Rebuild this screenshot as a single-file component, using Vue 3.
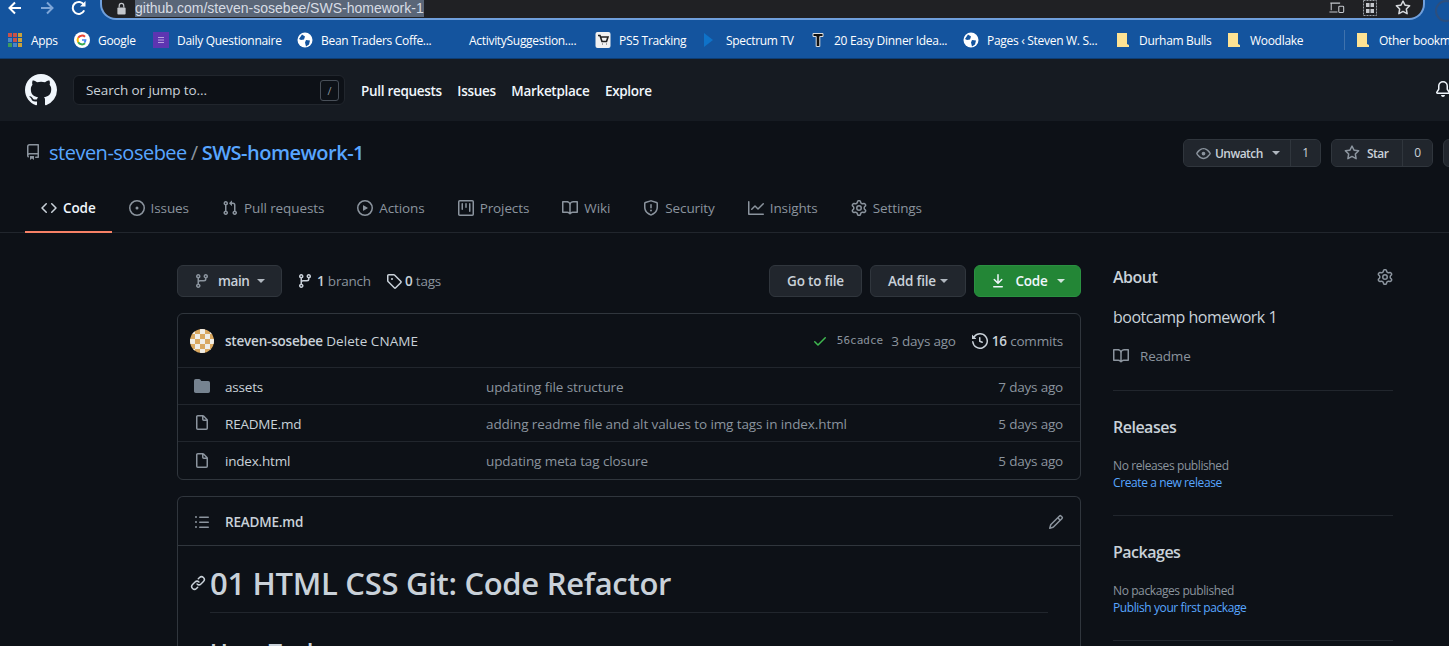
<script setup>
const icons = {
  github: 'M8 0C3.58 0 0 3.58 0 8c0 3.54 2.29 6.53 5.47 7.59.4.07.55-.17.55-.38 0-.19-.01-.82-.01-1.49-2.01.37-2.53-.49-2.69-.94-.09-.23-.48-.94-.82-1.13-.28-.15-.68-.52-.01-.53.63-.01 1.08.58 1.23.82.72 1.21 1.87.87 2.33.66.07-.52.28-.87.51-1.07-1.78-.2-3.64-.89-3.64-3.95 0-.87.31-1.59.82-2.15-.08-.2-.36-1.02.08-2.12 0 0 .67-.21 2.2.82.64-.18 1.32-.27 2-.27.68 0 1.36.09 2 .27 1.53-1.04 2.2-.82 2.2-.82.44 1.1.16 1.92.08 2.12.51.56.82 1.27.82 2.15 0 3.07-1.87 3.75-3.65 3.95.29.25.54.73.54 1.48 0 1.07-.01 1.93-.01 2.2 0 .21.15.46.55.38A8.013 8.013 0 0016 8c0-4.42-3.58-8-8-8z',
  repo: 'M2 2.5A2.5 2.5 0 014.5 0h8.75a.75.75 0 01.75.75v12.5a.75.75 0 01-.75.75h-2.5a.75.75 0 110-1.5h1.75v-2h-8a1 1 0 00-.714 1.7.75.75 0 01-1.072 1.05A2.495 2.495 0 012 11.5v-9zm10.5-1V9h-8c-.356 0-.694.074-1 .208V2.5a1 1 0 011-1h8zM5 12.25v3.25a.25.25 0 00.4.2l1.45-1.087a.25.25 0 01.3 0L8.6 15.7a.25.25 0 00.4-.2v-3.25a.25.25 0 00-.25-.25h-3.5a.25.25 0 00-.25.25z',
  code: 'M4.72 3.22a.75.75 0 011.06 1.06L2.06 8l3.72 3.72a.75.75 0 11-1.06 1.06L.47 8.53a.75.75 0 010-1.06l4.25-4.25zm6.56 0a.75.75 0 10-1.06 1.06L13.94 8l-3.72 3.72a.75.75 0 101.06 1.06l4.25-4.25a.75.75 0 000-1.06l-4.25-4.25z',
  issue: 'M8 9.5a1.5 1.5 0 100-3 1.5 1.5 0 000 3zM8 0a8 8 0 100 16A8 8 0 008 0zM1.5 8a6.5 6.5 0 1113 0 6.5 6.5 0 01-13 0z',
  pull: 'M7.177 3.073L9.573.677A.25.25 0 0110 .854v4.792a.25.25 0 01-.427.177L7.177 3.427a.25.25 0 010-.354zM3.75 2.5a.75.75 0 100 1.5.75.75 0 000-1.5zm-2.25.75a2.25 2.25 0 113 2.122v5.256a2.251 2.251 0 11-1.5 0V5.372A2.25 2.25 0 011.5 3.25zM11 2.5h-1V4h1a1 1 0 011 1v5.628a2.251 2.251 0 101.5 0V5A2.5 2.5 0 0011 2.5zm1 10.25a.75.75 0 111.5 0 .75.75 0 01-1.5 0zM3.75 12a.75.75 0 100 1.5.75.75 0 000-1.5z',
  play: 'M1.5 8a6.5 6.5 0 1113 0 6.5 6.5 0 01-13 0zM8 0a8 8 0 100 16A8 8 0 008 0zM6.379 5.227A.25.25 0 006 5.442v5.117a.25.25 0 00.379.214l4.264-2.559a.25.25 0 000-.428L6.379 5.227z',
  project: 'M1.75 0A1.75 1.75 0 000 1.75v12.5C0 15.216.784 16 1.75 16h12.5A1.75 1.75 0 0016 14.25V1.75A1.75 1.75 0 0014.25 0H1.75zM1.5 1.75a.25.25 0 01.25-.25h12.5a.25.25 0 01.25.25v12.5a.25.25 0 01-.25.25H1.75a.25.25 0 01-.25-.25V1.75zM11.75 3a.75.75 0 00-.75.75v7.5a.75.75 0 001.5 0v-7.5a.75.75 0 00-.75-.75zm-8.25.75a.75.75 0 011.5 0v5.5a.75.75 0 01-1.5 0v-5.5zM8 3a.75.75 0 00-.75.75v3.5a.75.75 0 001.5 0v-3.5A.75.75 0 008 3z',
  book: 'M0 1.75A.75.75 0 01.75 1h4.253c1.227 0 2.317.59 3 1.501A3.744 3.744 0 0111.006 1h4.245a.75.75 0 01.75.75v10.5a.75.75 0 01-.75.75h-4.507a2.25 2.25 0 00-1.591.659l-.622.621a.75.75 0 01-1.06 0l-.622-.621A2.25 2.25 0 005.258 13H.75a.75.75 0 01-.75-.75V1.75zm8.755 3a2.25 2.25 0 012.25-2.25H14.5v9h-3.757c-.71 0-1.4.201-1.992.572l.004-7.322zm-1.504 7.324l.004-5.073-.002-2.253A2.25 2.25 0 005.003 2.5H1.5v9h3.757a3.75 3.75 0 011.994.574z',
  shield: 'M7.467.133a1.75 1.75 0 011.066 0l5.25 1.68A1.75 1.75 0 0115 3.48V7c0 1.566-.32 3.182-1.303 4.682-.983 1.498-2.585 2.813-5.032 3.855a1.7 1.7 0 01-1.33 0c-2.447-1.042-4.049-2.357-5.032-3.855C1.32 10.182 1 8.566 1 7V3.48a1.75 1.75 0 011.217-1.667l5.25-1.68zm.61 1.429a.25.25 0 00-.153 0l-5.25 1.68a.25.25 0 00-.174.238V7c0 1.358.275 2.666 1.057 3.86.784 1.194 2.121 2.34 4.366 3.297a.2.2 0 00.154 0c2.245-.956 3.582-2.104 4.366-3.298C13.225 9.666 13.5 8.36 13.5 7V3.48a.25.25 0 00-.174-.237l-5.25-1.68zM9 10.5a1 1 0 11-2 0 1 1 0 012 0zm-.25-5.75a.75.75 0 10-1.5 0v3a.75.75 0 001.5 0v-3z',
  graph: 'M1.5 1.75a.75.75 0 00-1.5 0v12.5c0 .414.336.75.75.75h14.5a.75.75 0 000-1.5H1.5V1.75zm14.28 2.53a.75.75 0 00-1.06-1.06L10 7.94 7.53 5.47a.75.75 0 00-1.06 0L3.22 8.72a.75.75 0 001.06 1.06L7 7.06l2.47 2.47a.75.75 0 001.06 0l5.25-5.25z',
  gear: 'M7.429 1.525a6.593 6.593 0 011.142 0c.036.003.108.036.137.146l.289 1.105c.147.56.55.967.997 1.189.174.086.341.183.501.29.417.278.97.423 1.53.27l1.102-.303c.11-.03.175.016.195.046.219.31.41.641.573.989.014.031.022.11-.059.19l-.815.806c-.411.406-.562.957-.53 1.456a4.588 4.588 0 010 .582c-.032.499.119 1.05.53 1.456l.815.806c.08.08.073.159.059.19a6.494 6.494 0 01-.573.99c-.02.029-.086.074-.195.045l-1.103-.303c-.559-.153-1.112-.008-1.529.27-.16.107-.327.204-.5.29-.449.222-.851.628-.998 1.189l-.289 1.105c-.029.11-.101.143-.137.146a6.613 6.613 0 01-1.142 0c-.036-.003-.108-.037-.137-.146l-.289-1.105c-.147-.56-.55-.967-.997-1.189a4.502 4.502 0 01-.501-.29c-.417-.278-.97-.423-1.53-.27l-1.102.303c-.11.03-.175-.016-.195-.046a6.492 6.492 0 01-.573-.989c-.014-.031-.022-.11.059-.19l.815-.806c.411-.406.562-.957.53-1.456a4.587 4.587 0 010-.582c.032-.499-.119-1.05-.53-1.456l-.815-.806c-.08-.08-.073-.159-.059-.19a6.44 6.44 0 01.573-.99c.02-.029.086-.075.195-.045l1.103.303c.559.153 1.112.008 1.529-.27.16-.107.327-.204.5-.29.449-.222.851-.628.998-1.189l.289-1.105c.029-.11.101-.143.137-.146zM8 0c-.236 0-.47.01-.701.03-.743.065-1.29.615-1.458 1.261l-.29 1.106c-.017.066-.078.158-.211.224a5.994 5.994 0 00-.668.386c-.123.082-.233.09-.3.071L3.27 2.776c-.644-.177-1.392.02-1.82.63a7.977 7.977 0 00-.704 1.217c-.315.675-.111 1.422.363 1.891l.815.806c.05.048.098.147.088.294a6.084 6.084 0 000 .772c.01.147-.038.246-.088.294l-.815.806c-.474.469-.678 1.216-.363 1.891.2.428.436.835.704 1.218.428.609 1.176.806 1.82.63l1.103-.303c.066-.019.176-.011.299.071.213.143.436.272.668.386.133.066.194.158.212.224l.289 1.106c.169.646.715 1.196 1.458 1.26a8.094 8.094 0 001.402 0c.743-.064 1.29-.614 1.458-1.26l.29-1.106c.017-.066.078-.158.211-.224a5.98 5.98 0 00.668-.386c.123-.082.233-.09.3-.071l1.102.302c.644.177 1.392-.02 1.82-.63.268-.382.505-.789.704-1.217.315-.675.111-1.422-.364-1.891l-.814-.806c-.05-.048-.098-.147-.088-.294a6.1 6.1 0 000-.772c-.01-.147.039-.246.088-.294l.814-.806c.475-.469.679-1.216.364-1.891a7.992 7.992 0 00-.704-1.218c-.428-.609-1.176-.806-1.82-.63l-1.103.303c-.066.019-.176.011-.299-.071a5.991 5.991 0 00-.668-.386c-.133-.066-.194-.158-.212-.224L10.16 1.29C9.99.645 9.444.095 8.701.031A8.094 8.094 0 008 0zm1.5 8a1.5 1.5 0 11-3 0 1.5 1.5 0 013 0zM11 8a3 3 0 11-6 0 3 3 0 016 0z',
  eye: 'M1.679 7.932c.412-.621 1.242-1.75 2.366-2.717C5.175 4.242 6.527 3.5 8 3.5c1.473 0 2.824.742 3.955 1.715 1.124.967 1.954 2.096 2.366 2.717a.119.119 0 010 .136c-.412.621-1.242 1.75-2.366 2.717C10.825 11.758 9.473 12.5 8 12.5c-1.473 0-2.824-.742-3.955-1.715C2.92 9.818 2.09 8.69 1.679 8.068a.119.119 0 010-.136zM8 2c-1.981 0-3.67.992-4.933 2.078C1.797 5.169.88 6.423.43 7.1a1.619 1.619 0 000 1.798c.45.678 1.367 1.932 2.637 3.024C4.329 13.008 6.019 14 8 14c1.981 0 3.67-.992 4.933-2.078 1.27-1.091 2.187-2.345 2.637-3.023a1.619 1.619 0 000-1.798c-.45-.678-1.367-1.932-2.637-3.023C11.671 2.992 9.981 2 8 2zm0 8a2 2 0 100-4 2 2 0 000 4z',
  star: 'M8 .25a.75.75 0 01.673.418l1.882 3.815 4.21.612a.75.75 0 01.416 1.279l-3.046 2.97.719 4.192a.75.75 0 01-1.088.791L8 12.347l-3.766 1.98a.75.75 0 01-1.088-.79l.72-4.194L.818 6.374a.75.75 0 01.416-1.28l4.21-.611L7.327.668A.75.75 0 018 .25zm0 2.445L6.615 5.5a.75.75 0 01-.564.41l-3.097.45 2.24 2.184a.75.75 0 01.216.664l-.528 3.084 2.769-1.456a.75.75 0 01.698 0l2.77 1.456-.53-3.084a.75.75 0 01.216-.664l2.24-2.183-3.096-.45a.75.75 0 01-.564-.41L8 2.694v.001z',
  branch: 'M11.75 2.5a.75.75 0 100 1.5.75.75 0 000-1.5zm-2.25.75a2.25 2.25 0 113 2.122V6A2.5 2.5 0 0110 8.5H6a1 1 0 00-1 1v1.128a2.251 2.251 0 11-1.5 0V5.372a2.25 2.25 0 111.5 0v1.836A2.492 2.492 0 016 7h4a1 1 0 001-1v-.628A2.25 2.25 0 019.5 3.25zM4.25 12a.75.75 0 100 1.5.75.75 0 000-1.5zM3.5 3.25a.75.75 0 111.5 0 .75.75 0 01-1.5 0z',
  tag: 'M2.5 7.775V2.75a.25.25 0 01.25-.25h5.025a.25.25 0 01.177.073l6.25 6.25a.25.25 0 010 .354l-5.025 5.025a.25.25 0 01-.354 0l-6.25-6.25a.25.25 0 01-.073-.177zm-1.5 0V2.75C1 1.784 1.784 1 2.75 1h5.025c.464 0 .91.184 1.238.513l6.25 6.25a1.75 1.75 0 010 2.474l-5.026 5.026a1.75 1.75 0 01-2.474 0l-6.25-6.25A1.75 1.75 0 011 7.775zM6 5a1 1 0 100 2 1 1 0 000-2z',
  download: 'M7.47 10.78a.75.75 0 001.06 0l3.75-3.75a.75.75 0 00-1.06-1.06L8.75 8.44V1.75a.75.75 0 00-1.5 0v6.69L4.78 5.97a.75.75 0 00-1.06 1.06l3.75 3.75zM3.75 13a.75.75 0 000 1.5h8.5a.75.75 0 000-1.5h-8.5z',
  check: 'M13.78 4.22a.75.75 0 010 1.06l-7.25 7.25a.75.75 0 01-1.06 0L2.22 9.28a.75.75 0 011.06-1.06L6 10.94l6.72-6.72a.75.75 0 011.06 0z',
  history: 'M1.643 3.143L.427 1.927A.25.25 0 000 2.104V5.75c0 .138.112.25.25.25h3.646a.25.25 0 00.177-.427L2.715 4.215a6.5 6.5 0 11-1.18 4.458.75.75 0 10-1.493.154 8.001 8.001 0 101.6-5.684zM7.75 4a.75.75 0 01.75.75v2.992l2.028.812a.75.75 0 01-.557 1.392l-2.5-1A.75.75 0 017 8.25v-3.5A.75.75 0 017.75 4z',
  folder: 'M1.75 1A1.75 1.75 0 000 2.75v10.5C0 14.216.784 15 1.75 15h12.5A1.75 1.75 0 0016 13.25v-8.5A1.75 1.75 0 0014.25 3H7.5a.25.25 0 01-.2-.1l-.9-1.2C6.07 1.26 5.55 1 5 1H1.75z',
  file: 'M3.75 1.5a.25.25 0 00-.25.25v11.5c0 .138.112.25.25.25h8.5a.25.25 0 00.25-.25V6H9.75A1.75 1.75 0 018 4.25V1.5H3.75zm5.75.56v2.19c0 .138.112.25.25.25h2.19L9.5 2.06zM2 1.75C2 .784 2.784 0 3.75 0h5.086c.464 0 .909.184 1.237.513l3.414 3.414c.329.328.513.773.513 1.237v8.086A1.75 1.75 0 0112.25 15h-8.5A1.75 1.75 0 012 13.25V1.75z',
  list: 'M2 4a1 1 0 100-2 1 1 0 000 2zm3.75-1.5a.75.75 0 000 1.5h8.5a.75.75 0 000-1.5h-8.5zm0 5a.75.75 0 000 1.5h8.5a.75.75 0 000-1.5h-8.5zm0 5a.75.75 0 000 1.5h8.5a.75.75 0 000-1.5h-8.5zM3 8a1 1 0 11-2 0 1 1 0 012 0zm-1 6a1 1 0 100-2 1 1 0 000 2z',
  pencil: 'M11.013 1.427a1.75 1.75 0 012.474 0l1.086 1.086a1.75 1.75 0 010 2.474l-8.61 8.61c-.21.21-.47.364-.756.445l-3.251.93a.75.75 0 01-.927-.928l.929-3.25a1.75 1.75 0 01.445-.758l8.61-8.61zm1.414 1.06a.25.25 0 00-.354 0L10.811 3.75l1.439 1.44 1.263-1.263a.25.25 0 000-.354l-1.086-1.086zM11.189 6.25L9.75 4.81l-6.286 6.287a.25.25 0 00-.064.108l-.558 1.953 1.953-.558a.249.249 0 00.108-.064l6.286-6.286z',
  link: 'M7.775 3.275a.75.75 0 001.06 1.06l1.25-1.25a2 2 0 112.83 2.83l-2.5 2.5a2 2 0 01-2.83 0 .75.75 0 00-1.06 1.06 3.5 3.5 0 004.95 0l2.5-2.5a3.5 3.5 0 00-4.95-4.95l-1.25 1.25zm-4.69 9.64a2 2 0 010-2.83l2.5-2.5a2 2 0 012.83 0 .75.75 0 001.06-1.06 3.5 3.5 0 00-4.95 0l-2.5 2.5a3.5 3.5 0 004.95 4.95l1.25-1.25a.75.75 0 00-1.06-1.06l-1.25 1.25a2 2 0 01-2.83 0z',
  bell: 'M8 16a2 2 0 001.985-1.75c.017-.137-.097-.25-.235-.25h-3.5c-.138 0-.252.113-.235.25A2 2 0 008 16zM8 1.5A3.5 3.5 0 004.5 5v2.947c0 .346-.102.683-.294.97l-1.703 2.556a.018.018 0 00-.003.01l.001.006c0 .002.002.004.004.006a.017.017 0 00.006.004l.007.001h10.964l.007-.001a.018.018 0 00.006-.004.016.016 0 00.004-.006l.001-.007a.017.017 0 00-.003-.01l-1.703-2.554a1.75 1.75 0 01-.294-.97V5A3.5 3.5 0 008 1.5zM3 5a5 5 0 0110 0v2.947c0 .05.015.098.042.139l1.703 2.555A1.518 1.518 0 0113.482 13H2.518a1.518 1.518 0 01-1.263-2.36l1.703-2.554A.25.25 0 003 7.947V5z'
}

const bookmarks = [
  { label: 'Apps', icon: 'apps', w: 27 },
  { label: 'Google', icon: 'google', w: 39 },
  { label: 'Daily Questionnaire', icon: 'daily', w: 104 },
  { label: 'Bean Traders Coffe...', icon: 'globe', w: 108 },
  { label: 'ActivitySuggestion....', icon: 'none', w: 110 },
  { label: 'PS5 Tracking', icon: 'cart', w: 67 },
  { label: 'Spectrum TV', icon: 'spectrum', w: 68 },
  { label: '20 Easy Dinner Idea...', icon: 'tee', w: 113 },
  { label: 'Pages ‹ Steven W. S...', icon: 'globe', w: 112 },
  { label: 'Durham Bulls', icon: 'folder', w: 71 },
  { label: 'Woodlake', icon: 'folder', w: 54 }
]

const navLinks = ['Pull requests', 'Issues', 'Marketplace', 'Explore']

const tabs = [
  { label: 'Code', icon: 'code', active: true },
  { label: 'Issues', icon: 'issue' },
  { label: 'Pull requests', icon: 'pull' },
  { label: 'Actions', icon: 'play' },
  { label: 'Projects', icon: 'project' },
  { label: 'Wiki', icon: 'book' },
  { label: 'Security', icon: 'shield' },
  { label: 'Insights', icon: 'graph' },
  { label: 'Settings', icon: 'gear' }
]

const files = [
  { name: 'assets', icon: 'folder', msg: 'updating file structure', age: '7 days ago' },
  { name: 'README.md', icon: 'file', msg: 'adding readme file and alt values to img tags in index.html', age: '5 days ago' },
  { name: 'index.html', icon: 'file', msg: 'updating meta tag closure', age: '5 days ago' }
]

// avatar identicon cells
const avatarCells = [[0, 0], [10, 0], [20, 0], [5, 5], [15, 5], [0, 10], [10, 10], [20, 10], [5, 15], [15, 15], [0, 20], [10, 20], [20, 20]]
</script>

<template>
  <div class="page">
    <div class="chrome-top">
      <svg class="nav-arrow" viewBox="0 0 16 16"><path d="M14 8H3M8 2.5L2.5 8 8 13.5" fill="none" stroke="#fff" stroke-width="2"/></svg>
      <svg class="nav-arrow dim" viewBox="0 0 16 16"><path d="M2 8h11M8 2.5L13.5 8 8 13.5" fill="none" stroke="#7ea6d8" stroke-width="2"/></svg>
      <svg class="nav-arrow" viewBox="0 0 16 16"><path d="M13.2 10.4A6 6 0 1 1 13 5" fill="none" stroke="#fff" stroke-width="2"/><path d="M14.5 1v5.5H9z" fill="#fff"/></svg>
      <div class="omnibox">
        <svg class="lock" viewBox="0 0 12 14"><path d="M3.5 6V4a2.5 2.5 0 0 1 5 0v2" fill="none" stroke="#c4c7cc" stroke-width="1.3"/><rect x="1.5" y="6" width="9" height="7.5" rx="1" fill="#c4c7cc"/></svg>
        <span class="url">github.com/steven-sosebee/SWS-homework-1</span>
        <div class="omni-icons">
          <svg viewBox="0 0 18 16"><path d="M1.5 2.5h11M2.5 2.5v8M.5 12.5h9" fill="none" stroke="#c4c7cc" stroke-width="1.2"/><rect x="11" y="6" width="5.5" height="7" rx="1" fill="none" stroke="#c4c7cc" stroke-width="1.2"/></svg>
          <svg viewBox="0 0 16 16"><rect x="1.5" y=".5" width="13" height="15" fill="none" stroke="#9aa0a6" stroke-dasharray="2 1"/><rect x="4" y="3" width="3.5" height="4" fill="#c4c7cc"/><rect x="8.5" y="3" width="3.5" height="4" fill="#c4c7cc"/><rect x="4" y="9" width="3.5" height="4" fill="#c4c7cc"/><rect x="8.5" y="9" width="3.5" height="4" fill="#c4c7cc"/></svg>
          <svg viewBox="0 0 16 16"><path :d="icons.star" fill="#d5d8dc" fill-rule="evenodd"/></svg>
        </div>
      </div>
      <div class="profile"></div>
    </div>

    <div class="bookmarks">
      <div v-for="b in bookmarks" :key="b.label" class="bookmark">
        <svg class="bm-icon" viewBox="0 0 16 16">
          <template v-if="b.icon === 'apps'">
            <rect x="1" y="1" width="4" height="4" fill="#c9524a"/><rect x="6" y="1" width="4" height="4" fill="#c9524a"/><rect x="11" y="1" width="4" height="4" fill="#c9a13a"/>
            <rect x="1" y="6" width="4" height="4" fill="#4a86c8"/><rect x="6" y="6" width="4" height="4" fill="#c9524a"/><rect x="11" y="6" width="4" height="4" fill="#c9a13a"/>
            <rect x="1" y="11" width="4" height="4" fill="#3f9b5b"/><rect x="6" y="11" width="4" height="4" fill="#4a86c8"/><rect x="11" y="11" width="4" height="4" fill="#c9a13a"/>
          </template>
          <template v-else-if="b.icon === 'google'">
            <circle cx="8" cy="8" r="8" fill="#fff"/>
            <path d="M4.2 5.8A4.4 4.4 0 0 1 11 4.8" fill="none" stroke="#ea4335" stroke-width="2"/>
            <path d="M4.2 10.2a4.4 4.4 0 0 1 0-4.4" fill="none" stroke="#fbbc05" stroke-width="2"/>
            <path d="M11 11.2a4.4 4.4 0 0 1-6.8-1" fill="none" stroke="#34a853" stroke-width="2"/>
            <path d="M8 7.2h4.4c.2 1.5-.4 3-1.4 4l-1.4-1.2c.5-.4.8-1 .9-1.3H8z" fill="#4285f4"/>
          </template>
          <template v-else-if="b.icon === 'daily'">
            <rect width="16" height="16" fill="#5e35b1"/>
            <path d="M5 5.5h6M5 8h6M5 10.5h6" stroke="#b9a3e0" stroke-width="1"/>
          </template>
          <template v-else-if="b.icon === 'globe'">
            <circle cx="8" cy="8" r="7.5" fill="#fff"/>
            <path d="M5 2.5l3 2-1 3-3 .5-2-1zM9 8l4 .5-1 4-3 2-1-4z" fill="#14549e"/>
          </template>
          <template v-else-if="b.icon === 'cart'">
            <rect width="15" height="16" x=".5" rx="2" fill="#f1f1f1"/>
            <path d="M3 3.5h2l2 6h4.5l1.5-4.5H6M7 12h.5M11 12h.5" fill="none" stroke="#222" stroke-width="1.6"/>
          </template>
          <path v-else-if="b.icon === 'spectrum'" d="M2 1l9 7-9 7z" fill="#0f72c8"/>
          <path v-else-if="b.icon === 'tee'" d="M3 1.5h10v3h-3.2v10H6.2v-10H3z" fill="#111" stroke="#ddd" stroke-width="1"/>
          <path v-else-if="b.icon === 'folder'" d="M2 1h10v11l2 1v2H2z" fill="#fde293"/>
        </svg>
        <span class="bm-text" :style="{ width: b.w + 'px' }">{{ b.label }}</span>
      </div>
      <div class="bm-sep"></div>
      <div class="bookmark">
        <svg class="bm-icon" viewBox="0 0 16 16"><path d="M2 1h10v11l2 1v2H2z" fill="#fde293"/></svg>
        <span class="bm-text">Other bookmarks</span>
      </div>
    </div>

    <header class="gh-header">
      <svg class="logo" viewBox="0 0 16 16"><path :d="icons.github" fill="#f0f6fc" fill-rule="evenodd"/></svg>
      <div class="search">
        <span>Search or jump to...</span>
        <kbd class="slash">/</kbd>
      </div>
      <nav class="gh-nav">
        <a v-for="l in navLinks" :key="l">{{ l }}</a>
      </nav>
      <svg class="bell" viewBox="0 0 16 16"><path :d="icons.bell" fill="#f0f6fc" fill-rule="evenodd"/></svg>
    </header>

    <div class="repo-head">
      <div class="repo-title">
        <svg class="ic" viewBox="0 0 16 16"><path :d="icons.repo"/></svg>
        <a class="owner">steven-sosebee</a>
        <span class="slash-sep">/</span>
        <a class="repo-name">SWS-homework-1</a>
      </div>
      <div class="repo-actions">
        <div class="counter-btn">
          <span class="cb-main w1"><svg class="ic" viewBox="0 0 16 16"><path :d="icons.eye"/></svg><b>Unwatch</b><i class="caret"></i></span>
          <span class="cb-num">1</span>
        </div>
        <div class="counter-btn">
          <span class="cb-main w2"><svg class="ic" viewBox="0 0 16 16"><path :d="icons.star"/></svg><b>Star</b></span>
          <span class="cb-num">0</span>
        </div>
        <div class="counter-btn fork"></div>
      </div>
    </div>

    <nav class="tabs">
      <a v-for="t in tabs" :key="t.label" class="tab" :class="{ active: t.active }">
        <svg class="ic" viewBox="0 0 16 16"><path :d="icons[t.icon]"/></svg>
        <span>{{ t.label }}</span>
      </a>
    </nav>

    <div class="layout">
      <main class="main-col">
        <div class="file-nav">
          <button class="btn branch-btn"><svg class="ic" viewBox="0 0 16 16"><path :d="icons.branch"/></svg><span>main</span><i class="caret"></i></button>
          <a class="meta-link first"><svg class="ic" viewBox="0 0 16 16"><path :d="icons.branch"/></svg><b>1</b> branch</a>
          <a class="meta-link"><svg class="ic" viewBox="0 0 16 16"><path :d="icons.tag"/></svg><b>0</b> tags</a>
          <button class="btn goto">Go to file</button>
          <button class="btn addfile">Add file<i class="caret"></i></button>
          <button class="btn green"><svg class="ic" viewBox="0 0 16 16"><path :d="icons.download"/></svg><span>Code</span><i class="caret"></i></button>
        </div>

        <div class="file-box">
          <div class="commit-row">
            <svg class="avatar" viewBox="0 0 24 24">
              <rect width="24" height="24" fill="#d9a860"/>
              <rect v-for="c in avatarCells" :key="c.join()" :x="c[0]" :y="c[1]" width="5" height="5" fill="#f0ede6"/>
            </svg>
            <span class="commit-msg"><b>steven-sosebee</b> <span class="commit-text">Delete CNAME</span></span>
            <svg class="ic check" viewBox="0 0 16 16"><path :d="icons.check"/></svg>
            <code class="sha">56cadce</code>
            <span class="when">3 days ago</span>
            <svg class="ic hist" viewBox="0 0 16 16"><path :d="icons.history"/></svg>
            <span class="commits"><b>16</b> commits</span>
          </div>
          <div v-for="f in files" :key="f.name" class="file-row">
            <svg class="ic" :class="{ 'folder-ic': f.icon === 'folder' }" viewBox="0 0 16 16"><path :d="icons[f.icon]"/></svg>
            <span class="fname">{{ f.name }}</span>
            <span class="fmsg">{{ f.msg }}</span>
            <span class="fage">{{ f.age }}</span>
          </div>
        </div>

        <div class="readme">
          <div class="readme-head">
            <svg class="ic" viewBox="0 0 16 16"><path :d="icons.list"/></svg>
            <b>README.md</b>
            <svg class="ic pencil" viewBox="0 0 16 16"><path :d="icons.pencil"/></svg>
          </div>
          <div class="readme-body">
            <h1><svg class="ic anchor" viewBox="0 0 16 16"><path :d="icons.link"/></svg>01 HTML CSS Git: Code Refactor</h1>
            <h2>User Tasks</h2>
          </div>
        </div>
      </main>

      <aside class="side">
        <section class="side-sec about">
          <div class="side-title"><h3>About</h3><svg class="ic" viewBox="0 0 16 16"><path :d="icons.gear"/></svg></div>
          <p class="desc">bootcamp homework 1</p>
          <div class="readme-link"><svg class="ic" viewBox="0 0 16 16"><path :d="icons.book"/></svg>Readme</div>
        </section>
        <section class="side-sec">
          <h3>Releases</h3>
          <p class="none">No releases published</p>
          <a class="blue">Create a new release</a>
        </section>
        <section class="side-sec">
          <h3>Packages</h3>
          <p class="none">No packages published</p>
          <a class="blue">Publish your first package</a>
        </section>
      </aside>
    </div>
  </div>
</template>

<style>
html, body { margin: 0; background: #0d1117; overflow: hidden; }
</style>

<style scoped>
.page {
  width: 1449px;
  height: 646px;
  overflow: hidden;
  background: #0d1117;
  color: #c9d1d9;
  font-family: "Open Sans", "Noto Sans", sans-serif;
  font-size: 13.5px;
  letter-spacing: -0.2px;
}
.ic { width: 16px; height: 16px; fill: #8b949e; flex: none; fill-rule: evenodd; }
b { font-weight: 600; }

.chrome-top { display: flex; align-items: flex-start; height: 22px; background: #14549e; padding-left: 7px; width: 1500px; }
.nav-arrow { width: 16px; height: 16px; margin-right: 16px; flex: none; }
.chrome-top .nav-arrow:nth-child(3) { margin-right: 13px; margin-left: 0; }
.omnibox {
  display: flex; align-items: center; width: 1325px; height: 22px; margin-top: -2px;
  background: #202124; border: 2px solid #6f9fdc; border-top: 0; border-radius: 0 0 16px 16px;
  box-sizing: border-box; padding: 0 12px 0 14px;
}
.lock { width: 11px; height: 13px; margin-right: 8px; }
.url { background: #5a6678; color: #d7dce4; font-family: "Liberation Sans", sans-serif; font-size: 14px; line-height: 18px; letter-spacing: 0; }
.omni-icons { margin-left: auto; display: flex; gap: 17px; align-items: center; }
.omni-icons svg { width: 16px; height: 16px; }
.profile { width: 18px; height: 18px; border: 2px solid #2c4f7f; border-radius: 50%; margin-left: 10px; flex: none; }

.bookmarks { display: flex; align-items: center; height: 36px; background: #14549e; border-bottom: 1px solid #0e3d73; padding-left: 7px; width: 1560px; letter-spacing: 0; }
.bookmark { display: flex; align-items: center; gap: 8px; margin-right: 16px; }
.bm-icon { width: 16px; height: 16px; flex: none; }
.bm-text { color: #fff; font-size: 12px; letter-spacing: -0.3px; white-space: nowrap; font-family: "Open Sans", sans-serif; }
.bm-sep { width: 1px; height: 20px; background: #3f72ad; margin: 0 10px 0 24px; }

.gh-header { display: flex; align-items: center; height: 62px; background: #161b22; padding-left: 25px; position: relative; }
.logo { width: 32px; height: 32px; margin-right: 16px; flex: none; }
.search { display: flex; align-items: center; justify-content: space-between; width: 272px; height: 30px; box-sizing: border-box; background: #0d1117; border: 1px solid #21262d; border-radius: 6px; padding: 0 5px 0 12px; color: #c9d1d9; letter-spacing: -0.1px; }
.slash { width: 19px; height: 21px; box-sizing: border-box; border: 1px solid #484f58; border-radius: 3px; display: flex; align-items: center; justify-content: center; font-size: 11px; color: #8b949e; font-family: "Open Sans", sans-serif; }
.gh-nav { display: flex; gap: 15.5px; margin-left: 16px; padding-top: 1px; }
.gh-nav a { color: #f0f6fc; font-weight: 600; white-space: nowrap; letter-spacing: -0.3px; }
.bell { width: 16px; height: 16px; margin-left: auto; margin-right: -2px; transform: translateY(-1px); flex: none; }

.repo-head { display: flex; align-items: center; justify-content: space-between; width: 1553px; box-sizing: border-box; padding: 18px 25px 0 25px; height: 46px; }
.repo-title { display: flex; align-items: center; font-size: 20px; letter-spacing: -0.5px; white-space: nowrap; margin-top: -2px; }
.repo-title .ic { margin-right: 8px; }
.owner { color: #58a6ff; }
.slash-sep { color: #8b949e; margin: 0 4px; }
.repo-name { color: #58a6ff; font-weight: 600; }
.repo-actions { display: flex; gap: 10px; }
.counter-btn { display: flex; height: 28px; box-sizing: border-box; background: #21262d; border: 1px solid #30363d; border-radius: 6px; font-size: 12px; color: #c9d1d9; align-items: center; overflow: hidden; }
.cb-main { display: flex; align-items: center; height: 100%; padding-left: 12px; box-sizing: border-box; background: #21262d; border-right: 1px solid #30363d; }
.cb-main b { font-weight: 600; letter-spacing: -0.55px; }
.w1 { width: 107px; gap: 4px; }
.w1 .ic { width: 15px; height: 15px; }
.w1 .caret { margin-left: 5px; }
.w2 { width: 71px; gap: 7px; }
.cb-num { flex: 1; width: 29px; text-align: center; background: #21262d; height: 100%; line-height: 26px; }
.fork { width: 85px; }

.tabs { display: flex; gap: 1px; height: 45px; padding: 20px 0 0 25px; border-bottom: 1px solid #21262d; letter-spacing: -0.1px; }
.tab { display: flex; align-items: center; gap: 6px; height: 46px; box-sizing: border-box; padding: 0 16px 3px; color: #8b949e; white-space: nowrap; border-bottom: 2px solid transparent; }
.tab.active { color: #f0f6fc; font-weight: 600; border-bottom-color: #f78166; }
.tab.active .ic { fill: #c9d1d9; }

.layout { display: grid; grid-template-columns: 904px 280px; gap: 32px; padding: 32px 0 0 177px; }

.file-nav { display: flex; align-items: center; height: 32px; margin-bottom: 16px; }
.btn { display: flex; align-items: center; height: 32px; box-sizing: border-box; border: 1px solid #30363d; border-radius: 6px; background: #21262d; color: #c9d1d9; font: 600 13.5px "Open Sans", sans-serif; letter-spacing: -0.2px; padding: 0 16px; white-space: nowrap; }
.branch-btn { width: 105px; gap: 8px; padding-left: 16px; letter-spacing: -0.4px; }
.meta-link { display: flex; align-items: center; color: #8b949e; white-space: pre; margin-left: 15px; }
.meta-link .ic { margin-right: 3px; fill: #c9d1d9; }
.meta-link.first .ic { margin-right: 4px; }
.meta-link b { color: #c9d1d9; }
.goto { margin-left: auto; width: 93px; justify-content: center; padding: 0; }
.addfile { margin-left: 8px; width: 96px; justify-content: center; padding: 0; gap: 4px; }
.green { margin-left: 8px; width: 107px; justify-content: center; padding: 0; gap: 9px; background: #238636; border-color: #2a9141; color: #f0f6fc; }
.green .ic { fill: #f0f6fc; }
.caret { display: inline-block; width: 0; height: 0; border: 4px solid transparent; border-top-color: currentColor; border-bottom: 0; opacity: .85; }

.file-box { border: 1px solid #30363d; border-radius: 6px; height: 165px; margin-bottom: 16px; }
.commit-row { display: flex; align-items: center; height: 53px; padding: 0 17px 0 12px; border-bottom: 1px solid #21262d; }
.avatar { width: 24px; height: 24px; flex: none; margin-right: 11px; border-radius: 50%; }
.commit-msg { color: #c9d1d9; flex: 1; white-space: nowrap; }
.commit-text { letter-spacing: 0.05px; }
.check { fill: #3fb950; margin-right: 9px; }
.sha { font-family: "DejaVu Sans Mono", "Liberation Mono", monospace; font-size: 11px; letter-spacing: 0; color: #8b949e; margin-right: 8px; }
.when { color: #8b949e; margin-right: 16px; white-space: nowrap; }
.hist { fill: #c9d1d9; margin-right: 4px; }
.commits { color: #8b949e; white-space: nowrap; }
.commits b { color: #c9d1d9; }
.file-row { display: flex; align-items: center; height: 36px; padding: 0 17px 0 16px; border-bottom: 1px solid #21262d; }
.file-row span { position: relative; top: 0.5px; }
.file-row:last-child { border-bottom: 0; height: 37px; }
.file-row .ic { margin-right: 15px; }
.folder-ic { fill: #768390; }
.fname { width: 261px; color: #c9d1d9; }
.fmsg { flex: 1; color: #8b949e; white-space: nowrap; letter-spacing: -0.1px; }
.fage { color: #8b949e; white-space: nowrap; }

.readme { border: 1px solid #30363d; border-bottom: 0; border-radius: 6px 6px 0 0; }
.readme-head { display: flex; align-items: center; height: 47px; padding: 1px 16px 0; border-bottom: 1px solid #30363d; font-size: 13.5px; color: #c9d1d9; }
.readme-head .ic:first-child { margin-right: 15px; }
.pencil { margin-left: auto; fill: #8b949e; }
.readme-body { padding: 16px 32px 0; }
h1 { position: relative; margin: 0 0 24px; padding-bottom: 8px; font-size: 31px; font-weight: 600; line-height: 42px; letter-spacing: -0.3px; border-bottom: 1px solid #21262d; color: #c9d1d9; white-space: nowrap; }
.anchor { position: absolute; left: -20px; top: 13px; fill: #c9d1d9; }
h2 { margin: 0; font-size: 24px; font-weight: 600; line-height: 30px; color: #c9d1d9; letter-spacing: -0.3px; }

.side-sec { padding-bottom: 24px; margin-bottom: 24px; border-bottom: 1px solid #21262d; }
h3 { margin: 0; font-size: 16px; font-weight: 600; line-height: 24px; color: #c9d1d9; letter-spacing: -0.5px; }
.side-sec > h3 { margin-bottom: 18px; }
.side-title { display: flex; justify-content: space-between; align-items: center; height: 24px; }
.desc { margin: 16px 0 0; font-size: 16px; line-height: 24px; color: #c9d1d9; letter-spacing: -0.5px; }
.readme-link { display: flex; align-items: center; gap: 11px; margin-top: 17px; color: #8b949e; line-height: 20px; }
.none { margin: 0; font-size: 12px; line-height: 17px; color: #8b949e; letter-spacing: -0.4px; }
.blue { display: block; font-size: 12px; line-height: 17px; color: #58a6ff; letter-spacing: -0.4px; }
</style>
